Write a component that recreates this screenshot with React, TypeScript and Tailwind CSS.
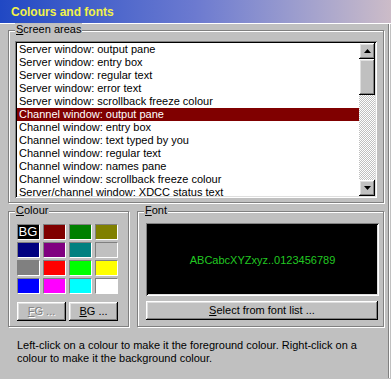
const areas = [
  'Server window: output pane',
  'Server window: entry box',
  'Server window: regular text',
  'Server window: error text',
  'Server window: scrollback freeze colour',
  'Channel window: output pane',
  'Channel window: entry box',
  'Channel window: text typed by you',
  'Channel window: regular text',
  'Channel window: names pane',
  'Channel window: scrollback freeze colour',
  'Server/channel window: XDCC status text',
];

const colours = [
  'bg-[#000000]', 'bg-[#800000]', 'bg-[#008000]', 'bg-[#808000]',
  'bg-[#000080]', 'bg-[#800080]', 'bg-[#008080]', 'bg-[#c0c0c0]',
  'bg-[#808080]', 'bg-[#ff0000]', 'bg-[#00ff00]', 'bg-[#ffff00]',
  'bg-[#0000ff]', 'bg-[#ff00ff]', 'bg-[#00ffff]', 'bg-[#ffffff]',
];

const raised =
  'bg-[#c0c0c0] shadow-[inset_-1px_-1px_0_#000,inset_1px_1px_0_#fff,inset_-2px_-2px_0_#808080,inset_2px_2px_0_#dfdfdf]';
const sunken =
  'shadow-[inset_1px_1px_0_#808080,inset_-1px_-1px_0_#fff,inset_2px_2px_0_#000,inset_-2px_-2px_0_#dfdfdf]';

function Group({ label, rest, className, children }: { label: string; rest: string; className: string; children: React.ReactNode }) {
  return (
    <div className={`relative border border-[#808080] shadow-[inset_1px_1px_0_#fff,1px_1px_0_#fff] ${className}`}>
      <span className="absolute -top-[8px] left-[6px] bg-[#c0c0c0] px-[1px] leading-[13px]">
        <span className="underline">{label}</span>
        {rest}
      </span>
      {children}
    </div>
  );
}

function Arrow({ up }: { up?: boolean }) {
  return (
    <svg width="7" height="4" viewBox="0 0 7 4">
      <polygon points={up ? '3.5,0 7,4 0,4' : '0,0 7,0 3.5,4'} fill="#000" />
    </svg>
  );
}

export default function App() {
  return (
    <div className="w-[391px] h-[379px] overflow-hidden bg-[#c0c0c0] text-[11px] text-black font-['Liberation_Sans',Arial,sans-serif]">
      <div className="h-[24px] border-b border-white flex items-center pl-[11px] bg-gradient-to-r from-[#2048c4] via-[#6c7ad0] to-[#ccbcc8] text-[12px] font-bold text-[#f2f24a]">
        Colours and fonts
      </div>

      <div className="w-[389px] h-[354px] border-r border-[#808080] shadow-[1px_0_0_#fff] pl-[8px] pt-[6px]">
        <Group label="S" rest="creen areas" className="w-[376px] h-[173px] pt-[10px] pl-[6px]">
          <div className={`w-[362px] h-[157px] p-[2px] flex bg-white ${sunken}`}>
            <div className="flex-1 overflow-hidden bg-white">
              {areas.map((a, i) => (
                <div
                  key={a}
                  className={`h-[13px] leading-[13px] pl-[2px] whitespace-nowrap ${i === 5 ? 'bg-[#800000] text-white' : ''}`}
                >
                  {a}
                </div>
              ))}
            </div>
            <div className="w-[16px] flex flex-col bg-[repeating-conic-gradient(#c0c0c0_0_25%,#ffffff_0_50%)] bg-[length:2px_2px]">
              <div className={`h-[16px] flex items-center justify-center ${raised}`}>
                <Arrow up />
              </div>
              <div className={`h-[36px] ${raised}`} />
              <div className="flex-1" />
              <div className={`h-[16px] flex items-center justify-center ${raised}`}>
                <Arrow />
              </div>
            </div>
          </div>
        </Group>

        <div className="flex gap-[8px] mt-[8px]">
          <Group label="C" rest="olour" className="w-[121px] h-[116px] pt-[12px] pl-[8px]">
            <div className="grid grid-cols-[repeat(4,22px)] gap-x-[4px] gap-y-[3px]">
              {colours.map((c, i) => (
                <div
                  key={i}
                  className={`h-[15px] ${c} shadow-[inset_1px_1px_0_#808080,1px_1px_0_#fff] flex items-center justify-center text-white text-[13px] leading-none`}
                >
                  {i === 0 ? 'BG' : ''}
                </div>
              ))}
            </div>
            <div className="flex gap-[3px] mt-[9px]">
              <div className={`w-[49px] h-[19px] flex items-center justify-center text-[#808080] [text-shadow:1px_1px_0_#fff] ${raised}`}>
                <span><span className="underline">F</span>G ...</span>
              </div>
              <div className={`w-[49px] h-[19px] flex items-center justify-center ${raised}`}>
                <span><span className="underline">B</span>G ...</span>
              </div>
            </div>
          </Group>

          <Group label="F" rest="ont" className="w-[247px] h-[116px] pt-[11px] pl-[8px]">
            <div className={`w-[233px] h-[73px] p-[2px] bg-[#c0c0c0] ${sunken}`}>
              <div className="w-full h-full bg-black flex items-center justify-center text-[#22c822] pt-[2px]">
                ABCabcXYZxyz..0123456789
              </div>
            </div>
            <div className={`w-[232px] h-[19px] mt-[5px] flex items-center justify-center ${raised}`}>
              <span><span className="underline">S</span>elect from font list ...</span>
            </div>
          </Group>
        </div>

        <p className="mt-[12px] pl-[9px] w-[360px] leading-[13px]">
          Left-click on a colour to make it the foreground colour. Right-click on a colour to make it the background colour.
        </p>
      </div>
    </div>
  );
}
